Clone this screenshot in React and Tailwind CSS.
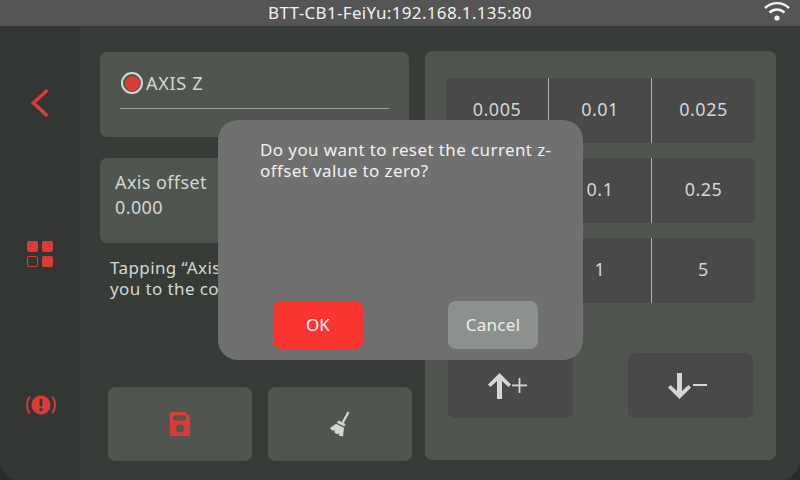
import { useState } from 'react';

const steps = [
  ['0.005', '0.01', '0.025'],
  ['0.05', '0.1', '0.25'],
  ['0.5', '1', '5'],
];

function WifiIcon() {
  return (
    <svg width="26" height="21" viewBox="0 0 26 21" fill="none" stroke="#f4f4f4" strokeWidth="2.4">
      <path d="M1 7 C8 0.5 18 0.5 25 7" />
      <path d="M5.5 11.5 C10 7.5 16 7.5 20.5 11.5" />
      <circle cx="13" cy="17" r="2.6" fill="#f4f4f4" stroke="none" />
    </svg>
  );
}

function SideIcons() {
  return (
    <div className="w-[80px] shrink-0 bg-[#333733] flex flex-col items-center">
      <svg className="mt-[62px]" width="20" height="30" viewBox="0 0 20 30" fill="none" stroke="#dc3b38" strokeWidth="3.6">
        <path d="M17.5 2 L3.5 15 L17.5 28" />
      </svg>
      <div className="mt-[123px] grid grid-cols-2 gap-[4px] w-[26px] mr-[1px]">
        <div className="w-[11px] h-[11px] rounded-[2px] bg-[#dc3b38]" />
        <div className="w-[11px] h-[11px] rounded-[2px] bg-[#dc3b38]" />
        <div className="w-[11px] h-[11px] rounded-[2px] border border-[#dc3b38]" />
        <div className="w-[11px] h-[11px] rounded-[2px] bg-[#dc3b38]" />
      </div>
      <svg className="mt-[128px] ml-[2px]" width="30" height="20" viewBox="0 0 30 20" fill="none">
        <circle cx="15" cy="10" r="9.5" fill="#dc3b38" />
        <rect x="13.6" y="3.8" width="2.8" height="7.6" rx="1" fill="#333733" />
        <circle cx="15" cy="14.6" r="1.7" fill="#333733" />
        <path d="M3.8 1.5 C0 6.5 0 13.5 3.8 18.5" stroke="#dc3b38" strokeWidth="1.9" />
        <path d="M26.2 1.5 C30 6.5 30 13.5 26.2 18.5" stroke="#dc3b38" strokeWidth="1.9" />
      </svg>
    </div>
  );
}

export default function App() {
  const [axis] = useState('AXIS Z');

  return (
    <div className="relative w-[800px] h-[480px] overflow-hidden bg-[#2b2d2b] font-['Noto_Sans','Liberation_Sans',sans-serif]">
      <div className="h-[26px] bg-[#555555] relative flex items-center justify-center text-[17px] tracking-[0.33px] text-[#f2f2f2]">
        BTT-CB1-FeiYu:192.168.1.135:80
        <div className="absolute right-[10px] top-[1px]">
          <WifiIcon />
        </div>
      </div>

      <div className="h-[454px] flex rounded-b-[20px] overflow-hidden bg-[#383c38]">
        <SideIcons />

        <div className="w-[345px] shrink-0 pl-[20px] pt-[26px]">
          <div className="w-[309px] h-[85px] rounded-[7px] bg-[#505550] px-[20px] pt-[19px]">
            <div className="flex items-center h-[24px] pl-[1px] text-[#d3d8d3] text-[18px] tracking-[0.7px]">
              <div className="w-[22px] h-[22px] rounded-full border-2 border-[#d3d8d3] flex items-center justify-center mr-[3px]">
                <div className="w-[15px] h-[15px] rounded-full bg-[#dc3b38]" />
              </div>
              {axis}
            </div>
            <div className="h-px bg-[#a0a4a0] mt-[13px]" />
          </div>

          <div className="w-[309px] h-[85px] mt-[21px] rounded-[7px] bg-[#505550] pl-[15px] pt-[12px] text-[18px] tracking-[0.4px] leading-[25px] text-[#d3d8d3]">
            <div>Axis offset</div>
            <div>0.000</div>
          </div>

          <p className="ml-[10px] mt-[14px] w-[290px] text-[17px] tracking-[0.4px] leading-[21px] text-[#d3d8d3]">
            Tapping “Axis offset” will take
            <br />
            you to the corresponding page.
          </p>

          <div className="mt-[88px] ml-[8px] flex gap-[16px]">
            <div className="w-[144px] h-[74px] rounded-[7px] bg-[#505550] flex items-center justify-center">
              <svg width="20" height="24" viewBox="0 0 20 24">
                <path d="M1.5 0 H15 L20 5 V22.5 Q20 24 18.5 24 H1.5 Q0 24 0 22.5 V1.5 Q0 0 1.5 0 Z" fill="#dc3b38" />
                <rect x="3" y="3.5" width="13" height="5" rx="1.5" fill="#505550" />
                <circle cx="10" cy="16.5" r="4" fill="#505550" />
              </svg>
            </div>
            <div className="w-[144px] h-[74px] rounded-[7px] bg-[#505550] flex items-center justify-center">
              <svg width="22" height="26" viewBox="0 0 22 26" fill="#d3d8d3">
                <path d="M18.5 0.5 L20.5 1.5 L14.8 12 L12.8 11 Z" />
                <path d="M9.5 9.5 L16.5 13 L15.5 15.5 L7.8 11.8 Z" />
                <path d="M7 12.8 L15 16.8 L14 25.5 L9.5 24.5 L10.5 22.5 L7.5 23 L5 21 L6.5 19.5 L3 19.5 L1 17 Z" />
              </svg>
            </div>
          </div>
        </div>

        <div className="w-[351px] h-[409px] mt-[25px] rounded-[7px] bg-[#505550] pl-[21px] pt-[27px]">
          <div className="flex flex-col gap-[15px]">
            {steps.map((row) => (
              <div key={row[0]} className="w-[309px] h-[65px] rounded-[5px] bg-[#494949] grid grid-cols-[103px_103px_103px] text-[#d3d8d3] text-[18px] tracking-[0.5px]">
                {row.map((val, i) => (
                  <div key={val} className={`flex items-center justify-center pb-[2px] ${i < 2 ? 'border-r border-[#b4b4b4]' : ''}`}>
                    {val}
                  </div>
                ))}
              </div>
            ))}
          </div>

          <div className="flex mt-[50px] ml-[2px] gap-[55px]">
            <div className="w-[125px] h-[65px] rounded-[7px] bg-[#494949] flex items-center justify-center pr-[5px]">
              <svg width="40" height="28" viewBox="0 0 40 28" fill="#d3d8d3">
                <path d="M11.5 1 L23 12.5 L20.5 15 L14 9 V27 H9 V9 L2.5 15 L0 12.5 Z" />
                <rect x="24" y="12.5" width="15" height="1.8" />
                <rect x="30.6" y="6" width="1.8" height="15" />
              </svg>
            </div>
            <div className="w-[125px] h-[65px] rounded-[7px] bg-[#494949] flex items-center justify-center pr-[5px]">
              <svg width="40" height="28" viewBox="0 0 40 28" fill="#d3d8d3">
                <path d="M11.5 27 L23 15.5 L20.5 13 L14 19 V1 H9 V19 L2.5 13 L0 15.5 Z" />
                <rect x="25" y="12" width="14" height="2" />
              </svg>
            </div>
          </div>
        </div>
      </div>

      <div className="absolute left-[218px] top-[120px] w-[365px] h-[240px] rounded-[20px] bg-[#707070] flex flex-col">
        <p className="ml-[42px] mt-[19px] w-[305px] text-[17px] tracking-[0.4px] leading-[21px] text-[#f2f2f2]">
          Do you want to reset the current z-offset value to zero?
        </p>
        <div className="mt-auto mb-[11px] ml-[55px] flex gap-[85px]">
          <div className="w-[90px] h-[48px] rounded-[8px] bg-[#fb3532] text-[#f6f6f6] text-[17px] flex items-center justify-center">OK</div>
          <div className="w-[90px] h-[48px] rounded-[8px] bg-[#8d918d] text-[#eeeeee] text-[17px] tracking-[0.3px] flex items-center justify-center">Cancel</div>
        </div>
      </div>
    </div>
  );
}
